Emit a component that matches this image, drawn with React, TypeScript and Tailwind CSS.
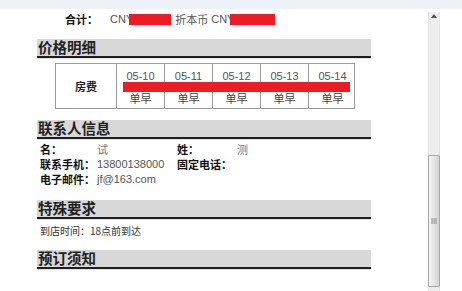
import React from "react";

const sans = "font-['Liberation_Sans','Noto_Sans_CJK_SC',sans-serif]";
const cjk = "font-['Noto_Sans_CJK_SC','Liberation_Sans',sans-serif]";

function Header({ title }: { title: string }) {
  return (
    <div className="w-[334px]">
      <div className={`h-[17px] bg-[#d8d8d8] pl-[1px] text-[14.5px] font-bold leading-[15px] text-[#222] ${cjk}`}>
        {title}
      </div>
      <div className="h-[2px] bg-[#1e1e1e]" />
      <div className="h-[1px] bg-[#e2e2e2]" />
    </div>
  );
}

const dates = ["05-10", "05-11", "05-12", "05-13", "05-14"];

export default function App() {
  return (
    <div className={`relative h-[291px] w-[462px] overflow-hidden bg-white ${sans}`}>
      <div className="h-[9px] bg-[#edf1f8]" />
      <div className="flex">
        <div className="w-[428px] pl-[37px]">
          {/* total line */}
          <div className="mt-[3px] flex h-[15px] items-center pl-[28px] text-[11px] leading-[15px]">
            <span className={`font-bold text-[#111] ${cjk}`}>合计：</span>
            <span className="ml-[12px] text-[#555]">CNY</span>
            <span className="ml-[-4px] inline-block h-[11px] w-[42px] bg-[#ed1c24]" />
            <span className={`ml-[4px] text-[#555] ${cjk}`}>折本币</span>
            <span className="ml-[3px] text-[#555]">CNY</span>
            <span className="ml-[-4px] inline-block h-[11px] w-[45px] bg-[#ed1c24]" />
          </div>

          <div className="mt-[12px]">
            <Header title="价格明细" />
          </div>

          {/* price table */}
          <div className="relative ml-[18px] mt-[4px] w-[300px]">
            <div className="grid grid-cols-[60px_repeat(5,48px)] border border-[#9a9a9a] text-[11px]">
              <div className={`row-span-2 flex items-center justify-center font-bold text-[#222] ${cjk}`}>房费</div>
              {dates.map((d) => (
                <div key={d} className="row-span-2 flex flex-col border-l border-[#9a9a9a]">
                  <div className="flex h-[23px] items-center justify-center pt-[1px] text-[#555]">{d}</div>
                  <div className={`flex h-[21px] items-center justify-center pt-[2px] text-[#444] ${cjk}`}>单早</div>
                </div>
              ))}
            </div>
            <div className="absolute left-[68px] top-[19px] h-[10px] w-[227px] bg-[#ed1c24]" />
          </div>

          <div className="mt-[11px]">
            <Header title="联系人信息" />
          </div>

          {/* contact info */}
          <div className="mt-[2px] grid grid-cols-[57px_80px_60px_1fr] pl-[3px] text-[11px] leading-[15px]">
            <span className={`font-bold text-[#111] ${cjk}`}>名：</span>
            <span className={`text-[#777] ${cjk}`}>试</span>
            <span className={`font-bold text-[#111] ${cjk}`}>姓：</span>
            <span className={`text-[#777] ${cjk}`}>测</span>
            <span className={`whitespace-nowrap font-bold text-[#111] ${cjk}`}>联系手机：</span>
            <span className="text-[#555]">13800138000</span>
            <span className={`whitespace-nowrap font-bold text-[#111] ${cjk}`}>固定电话：</span>
            <span />
            <span className={`whitespace-nowrap font-bold text-[#111] ${cjk}`}>电子邮件：</span>
            <span className="text-[#555]">jf@163.com</span>
            <span />
            <span />
          </div>

          <div className="mt-[13px]">
            <Header title="特殊要求" />
          </div>

          <div className={`mt-[4px] h-[14px] pl-[3px] text-[10px] leading-[14px] text-[#333] ${cjk}`}>
            到店时间：18点前到达
          </div>

          <div className="mt-[12px]">
            <Header title="预订须知" />
          </div>
        </div>

        {/* scrollbar */}
        <div className="relative mt-[3px] flex h-[290px] w-[12px] flex-col border-l border-r border-[#e2e2e2] bg-[#eeeeee]">
          <div className="flex h-[8px] items-center justify-center">
            <svg width="6" height="4" viewBox="0 0 6 4">
              <path d="M3 0 L6 4 L0 4 Z" fill="#555" />
            </svg>
          </div>
          <div className="absolute left-[-1px] top-[143px] flex h-[132px] w-[12px] items-center justify-center rounded-[1px] border border-[#a8a8a8] bg-gradient-to-r from-[#f6f6f6] to-[#d4d4d4]">
            <svg width="6" height="6" viewBox="0 0 6 6">
              <path d="M0 1 H6 M0 3 H6 M0 5 H6" stroke="#8a8a8a" strokeWidth="1" />
            </svg>
          </div>
        </div>
      </div>
    </div>
  );
}
